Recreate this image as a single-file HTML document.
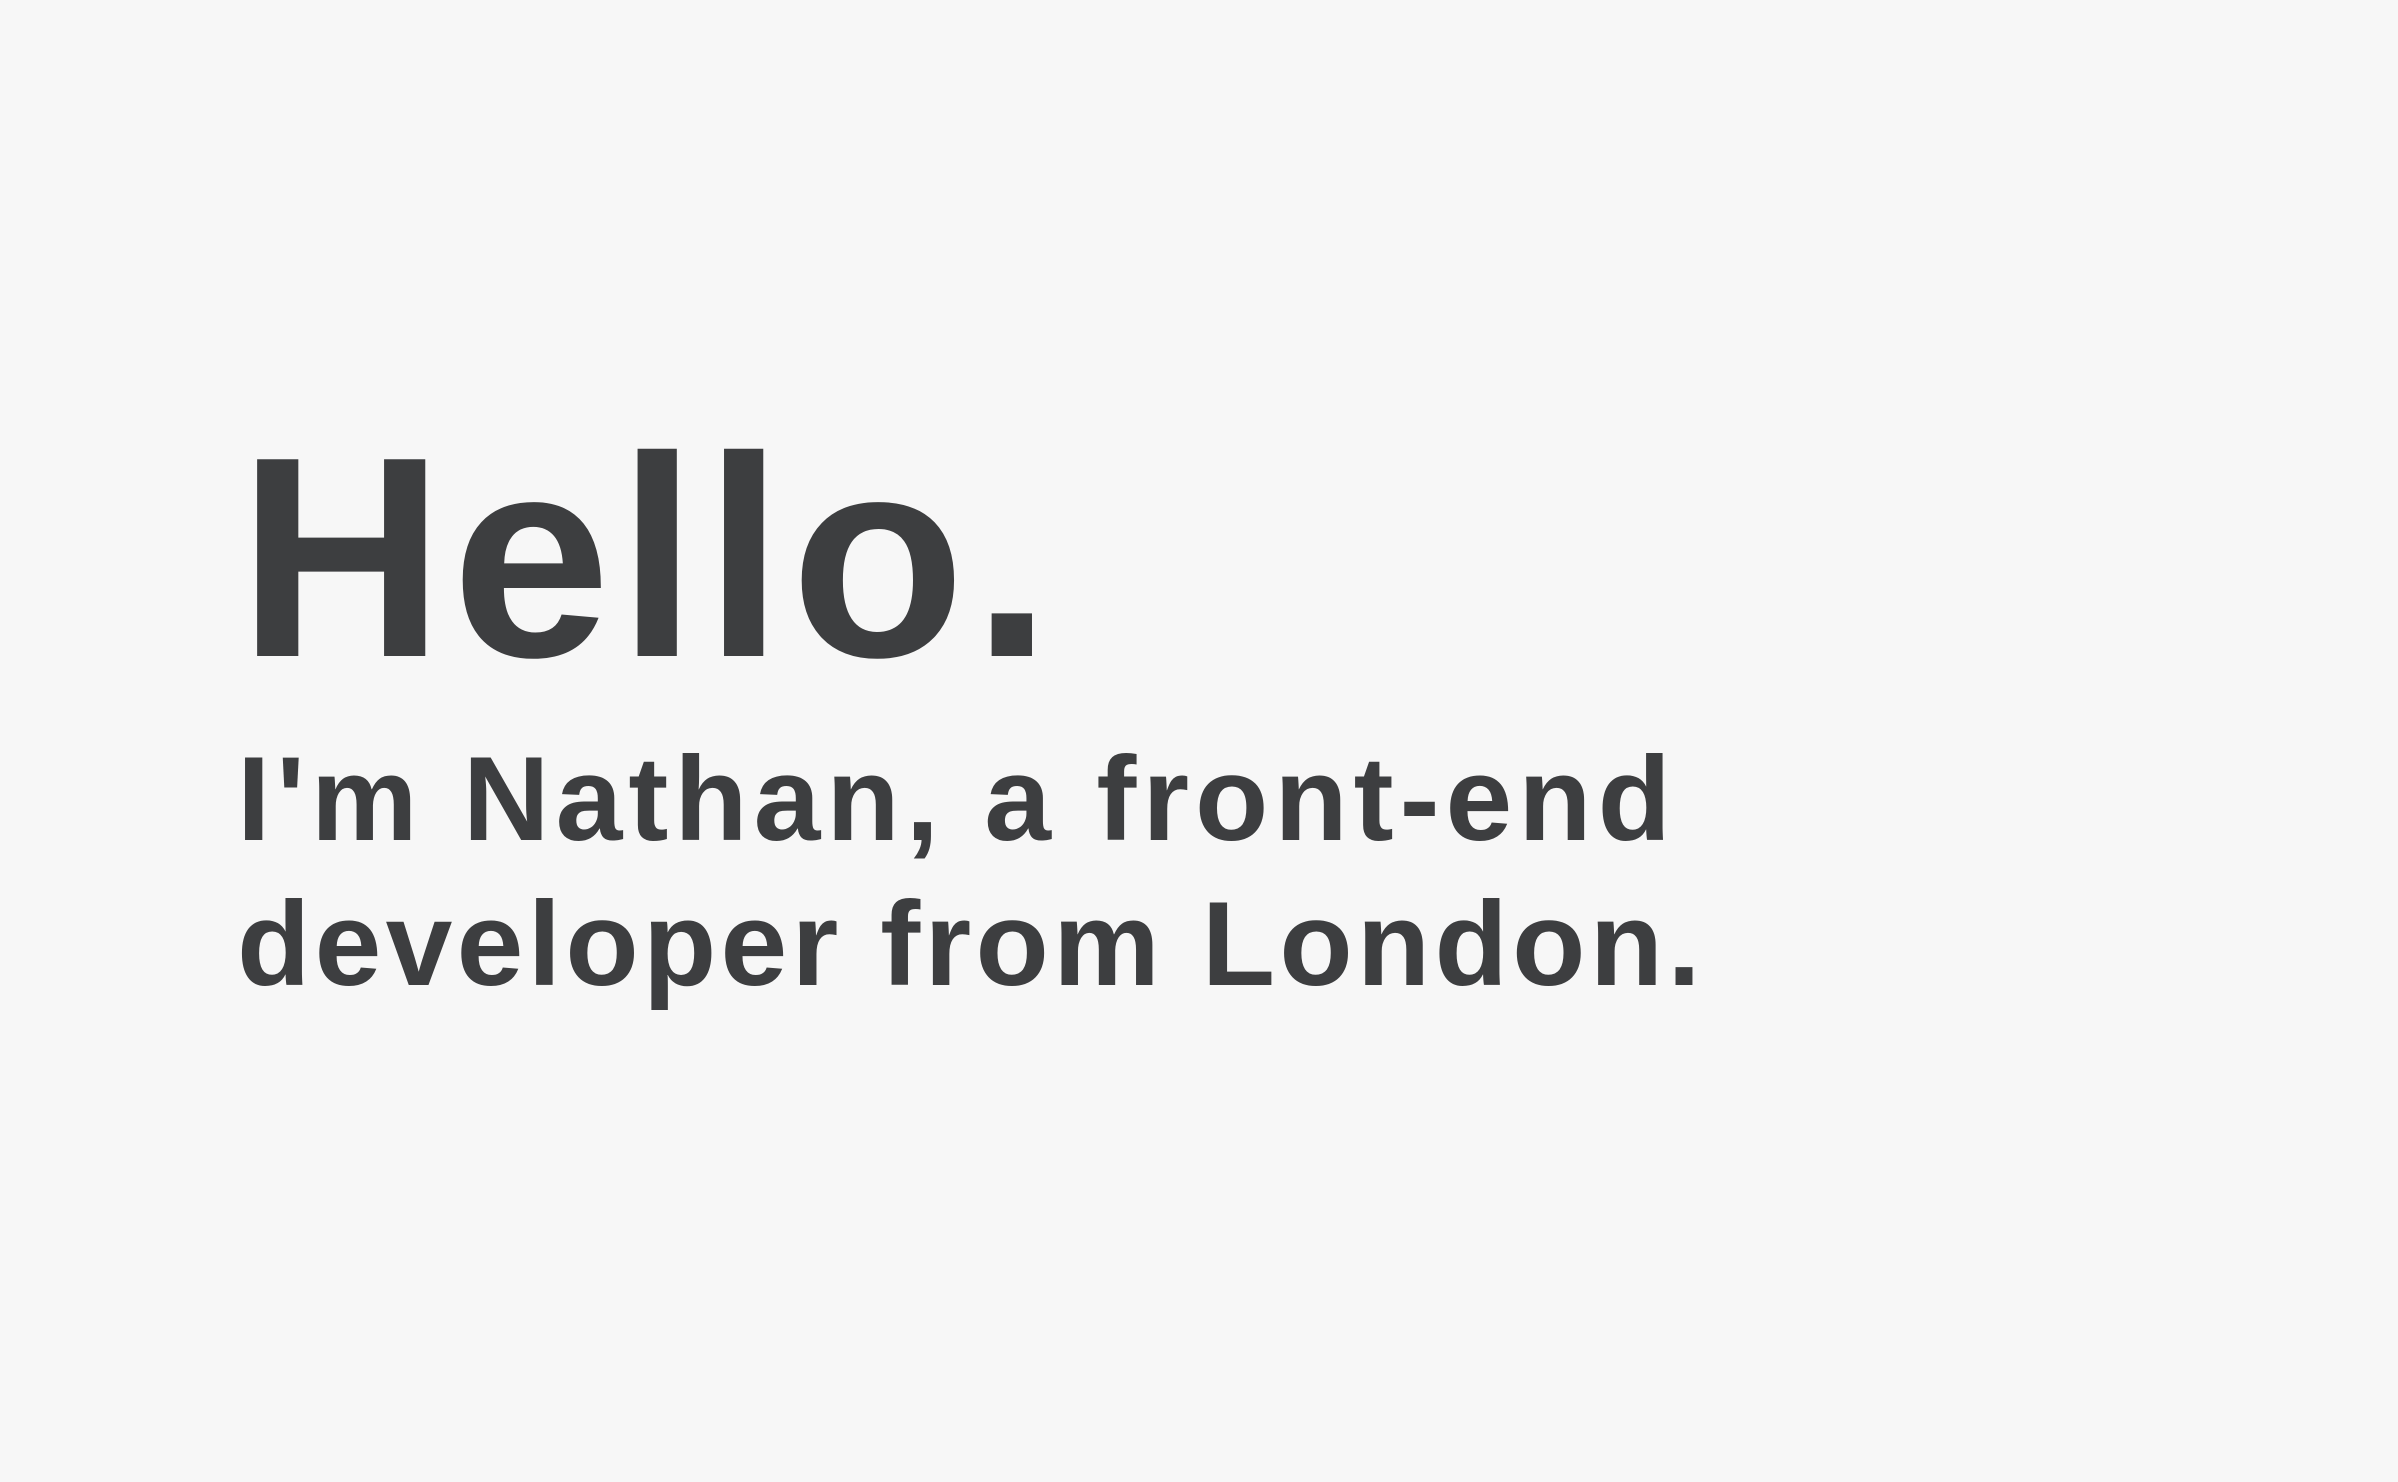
<!DOCTYPE html>
<html><head><meta charset="utf-8"><style>
html,body{margin:0;padding:0;background:#f7f7f7;width:2398px;height:1482px;overflow:hidden}
.t{position:absolute;font-family:"Liberation Sans",sans-serif;font-weight:bold;color:#3d3e40;white-space:nowrap}
#h{left:238px;top:414px;font-size:286px;line-height:286px;letter-spacing:7px}
#s{left:237px;top:727px;font-size:120px;line-height:145px;letter-spacing:6px}
#s2{letter-spacing:4.3px}
</style></head><body>
<div class="t" id="h">Hello.</div>
<div class="t" id="s">I'm Nathan, a front-end<br><span id="s2">developer from London.</span></div>
</body></html>
